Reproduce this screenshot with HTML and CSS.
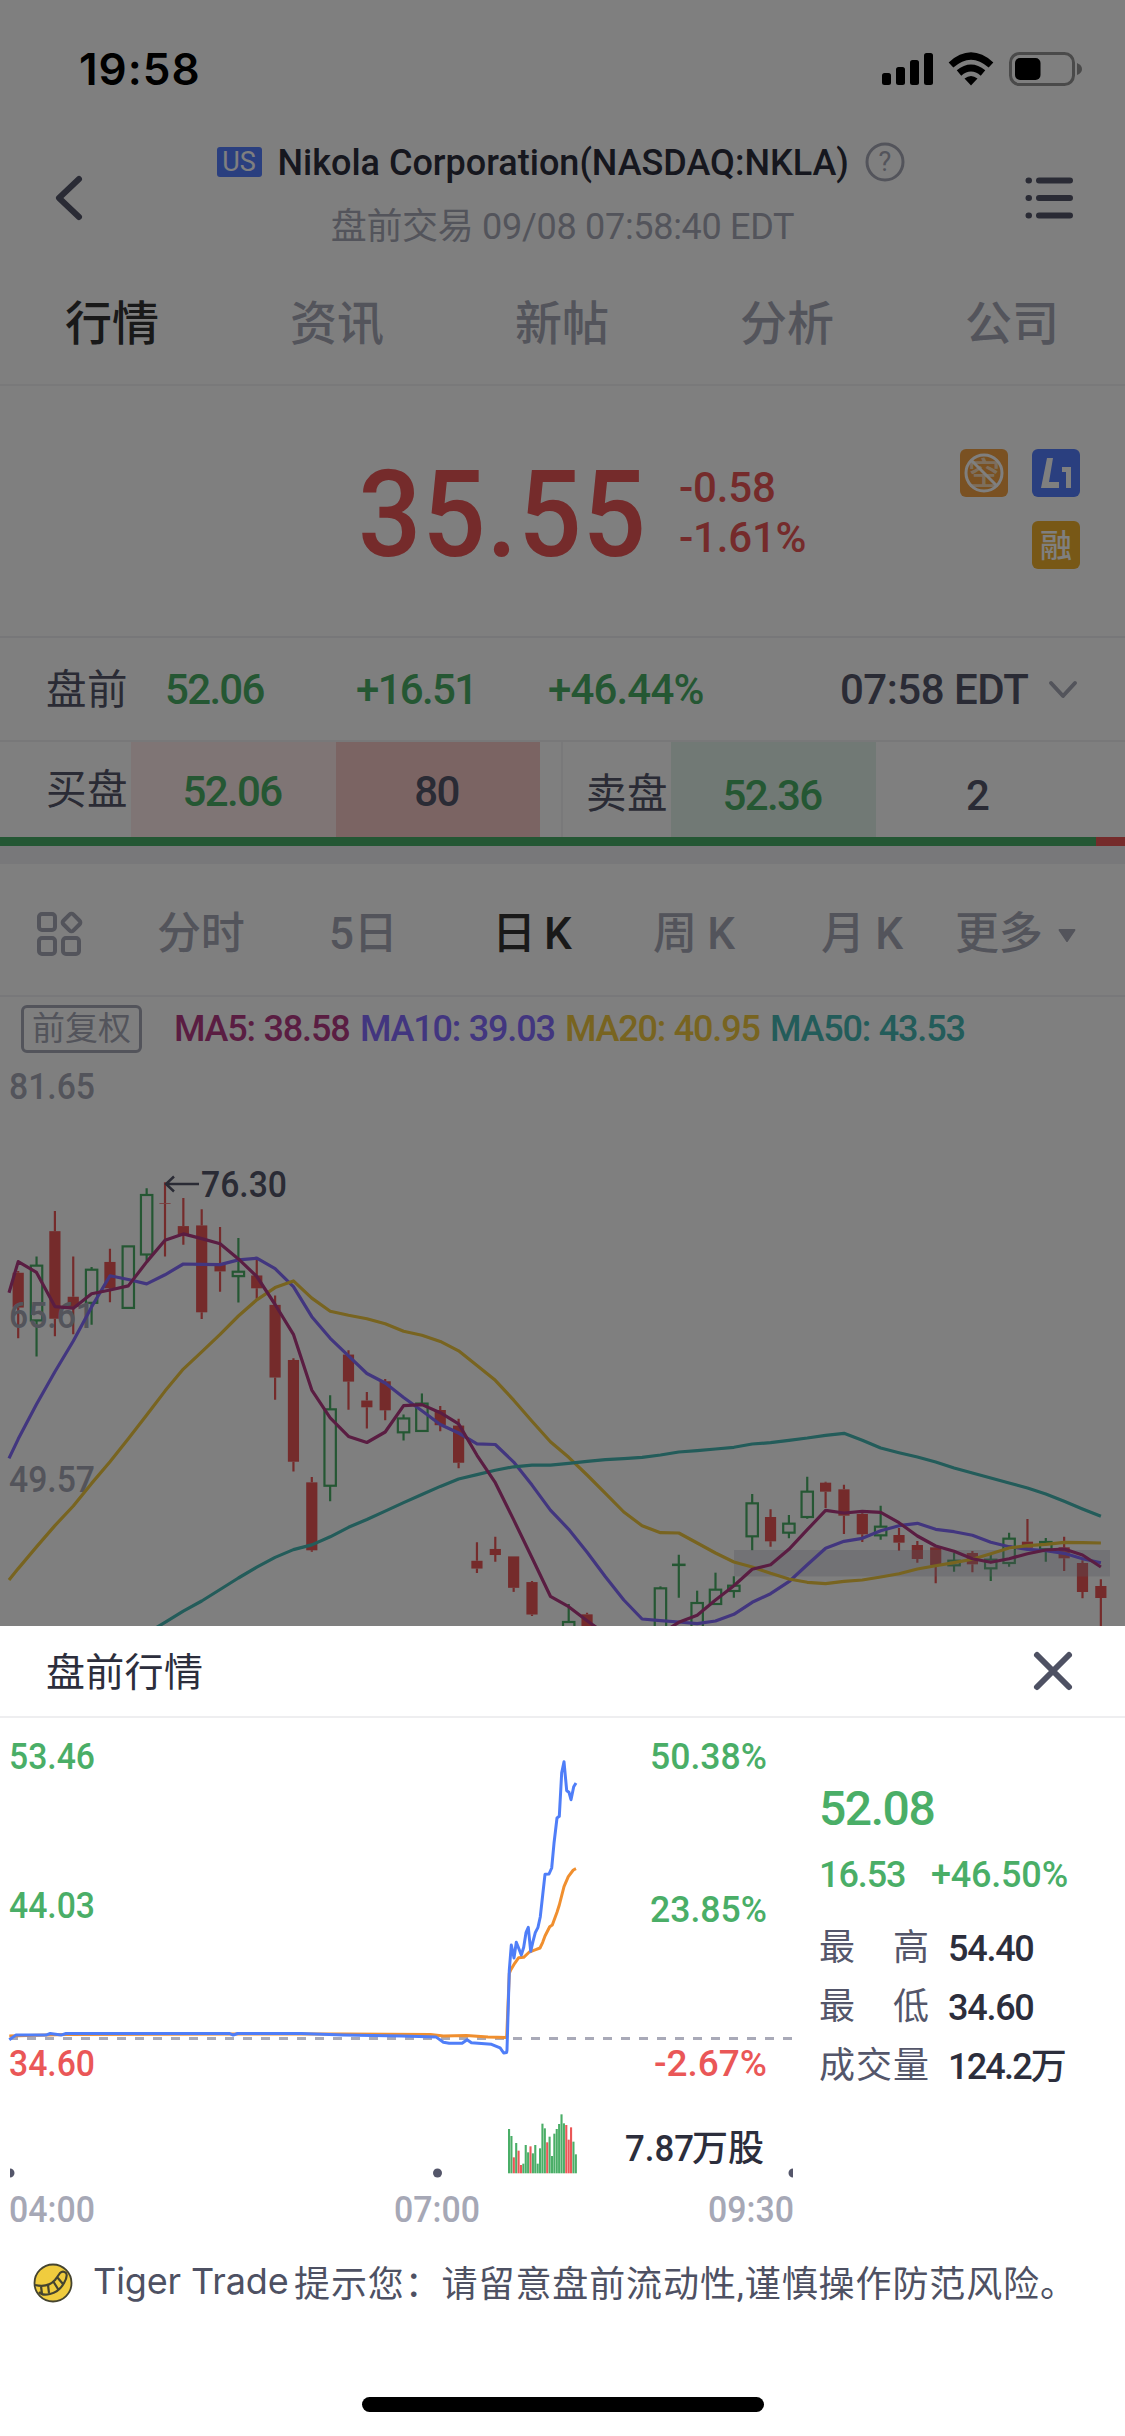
FILE: index.html
```html
<!DOCTYPE html>
<html lang="zh-CN">
<head>
<meta charset="utf-8">
<title>Nikola Corporation (NKLA)</title>
<link rel="stylesheet" href="styles.css">
</head>
<body>
<div class="phone">
  <main class="page">
    <div class="status">
      <span class="clock">19:58</span>
      <svg class="status-icons" width="202" height="36" viewBox="881 51 202 36">
        <rect x="882" y="73" width="9" height="12" rx="2.5"/><rect x="896" y="67" width="9" height="18" rx="2.5"/><rect x="910" y="60" width="9" height="25" rx="2.5"/><rect x="924" y="53" width="9" height="32" rx="2.5"/>
        <g fill="none" stroke="#000" stroke-width="7"><path d="M951 65Q971 47 991 65"/><path d="M959 73Q971 63 983 73"/></g>
        <path d="M964.500 78.500Q971 73.500 977.500 78.500L971 85.500Z"/>
        <rect x="1010.500" y="53.500" width="63" height="31" rx="9" fill="none" stroke="#000" stroke-opacity=".42" stroke-width="3"/>
        <rect x="1015" y="58" width="25.500" height="22" rx="5"/>
        <path d="M1077 63Q1082 65 1082 69T1077 75Z" fill-opacity=".42"/>
      </svg>
    </div>

    <header class="header">
      <svg class="back" width="36" height="52" viewBox="0 0 36 52"><path d="M29 7 9 26 29 45"/></svg>
      <div class="heading">
        <div class="title-row"><span class="market">US</span><h1>Nikola Corporation(NASDAQ:NKLA)</h1>
          <svg width="40" height="40" viewBox="0 0 40 40"><circle cx="20" cy="20" r="18" fill="none" stroke="#a6a8b6" stroke-width="3"/><text x="20" y="29" text-anchor="middle" class="q">?</text></svg>
        </div>
        <div class="subtitle">盘前交易 09/08 07:58:40 EDT</div>
      </div>
      <svg class="list" width="48" height="44" viewBox="0 0 48 44"><path d="M3.500 4.500h.5M14 4.500h31M3.500 22h.5M14 22h31M3.500 39.500h.5M14 39.500h31"/></svg>
    </header>

    <nav class="tabs"><span class="on">行情</span><span>资讯</span><span>新帖</span><span>分析</span><span>公司</span></nav>

    <section class="price">
      <span class="last">35.55</span>
      <div class="delta"><span>-0.58</span><span>-1.61%</span></div>
      <div class="tags">
        <svg width="48" height="48" viewBox="0 0 48 48"><rect width="48" height="48" rx="6" fill="#f4a344"/><text x="24" y="36" text-anchor="middle" class="tag-text soft">空</text><circle cx="24" cy="24" r="18" fill="none" stroke="#fff" stroke-width="3"/><path d="m11 11 26 26" stroke="#fff" stroke-width="3"/></svg>
        <svg width="48" height="48" viewBox="0 0 48 48"><rect width="48" height="48" rx="6" fill="#547eff"/><path d="M15 9h6l-4 24h10v6H9ZM30 18h9v21h-5V23h-4Z" fill="#fff"/></svg>
        <svg class="second" width="48" height="48" viewBox="0 0 48 48"><rect width="48" height="48" rx="6" fill="#f0b02c"/><text x="24" y="35.500" text-anchor="middle" class="tag-text">融</text></svg>
      </div>
    </section>

    <section class="premarket">
      <span class="cjk">盘前</span><span class="up">52.06</span><span class="up">+16.51</span><span class="up pct">+46.44%</span><span class="when">07:58 EDT</span>
      <svg width="32" height="22" viewBox="0 0 32 22"><path d="m4 4 12 13L28 4"/></svg>
    </section>

    <section class="book">
      <span class="cjk">买盘</span><span class="cell bid up">52.06</span><span class="cell bid-size">80</span><i class="rule"></i>
      <span class="cjk ask-label">卖盘</span><span class="cell ask up">52.36</span><span class="cell ask-size">2</span>
    </section>
    <div class="ratio"><i></i><i></i></div>

    <nav class="periods">
      <svg width="48" height="48" viewBox="0 0 48 48"><rect x="3" y="4" width="16" height="16" rx="3"/><rect x="3" y="28" width="16" height="16" rx="3"/><rect x="27" y="28" width="16" height="16" rx="3"/><rect x="28.500" y="5.500" width="14" height="14" rx="2.500" transform="rotate(45 35.500 12.500)"/></svg>
      <span>分时</span><span>5日</span><span class="on">日 K</span><span>周 K</span><span>月 K</span><span>更多</span>
      <svg class="caret" width="20" height="16" viewBox="0 0 20 16"><path d="M2 1h16q1 1 0 2L10.500 14h-1L2 3Q1 2 2 1Z"/></svg>
    </nav>

    <section class="chart">
      <div class="legend"><span class="adjust">前复权</span><span class="ma5">MA5: 38.58</span><span class="ma10">MA10: 39.03</span><span class="ma20">MA20: 40.95</span><span class="ma50">MA50: 43.53</span></div>
      <svg id="kline" width="1125" height="568" viewBox="0 1058 1125 568"></svg>
    </section>
  </main>
  <div class="scrim"></div>

  <section class="sheet">
    <div class="sheet-head"><h2>盘前行情</h2><svg width="48" height="48" viewBox="0 0 48 48"><path d="m8 8 32 32M40 8 8 40"/></svg></div>
    <div class="sheet-body">
      <svg id="intraday" width="800" height="520" viewBox="0 1718 800 520"></svg>
      <div class="stats">
        <div class="big up">52.08</div>
        <div class="change up"><span>16.53</span><span class="pct">+46.50%</span></div>
        <div class="stat"><span class="k"><b>最</b><b>高</b></span><span>54.40</span></div>
        <div class="stat"><span class="k"><b>最</b><b>低</b></span><span>34.60</span></div>
        <div class="stat"><span class="k"><b>成</b><b>交</b><b>量</b></span><span>124.2万</span></div>
      </div>
    </div>
    <div class="tip">
      <svg width="40" height="40" viewBox="0 0 40 40"><circle cx="20" cy="20" r="18.500" fill="#f0cc3e" stroke="#45442f" stroke-width="1.800"/><path d="M2 22Q15 25 22 17 25 13 27 10 30 7 33 10 35 13 31 20 26 29 17 31 9 33 6 29M8 23l1 8M15 22l1 8M20 18l5 8M24 14l6 7" fill="none" stroke="#45442f" stroke-width="2.200"/></svg>
      <span class="brand">Tiger Trade</span><span class="msg">提示您：请留意盘前流动性,谨慎操作防范风险。</span>
    </div>
    <div class="home"></div>
  </section>
</div>
<script src="chart.js"></script>
</body>
</html>
```
FILE: styles.css
```css
* { box-sizing: border-box; }
body { margin: 0; background: #fff; }
.phone {
  position: relative; width: 1125px; height: 2436px; overflow: hidden;
  font-family: Roboto, "Noto Sans CJK SC", sans-serif; font-size: 42px; letter-spacing: -.04em;
  color: #54566a; white-space: nowrap;
}
svg { display: block; flex: none; }
h1, h2 { margin: 0; font-weight: 400; }
.page { height: 1626px; overflow: hidden; background: #fff; }
.scrim { position: absolute; left: 0; top: 0; width: 1125px; height: 1626px; background: rgba(0,0,0,.5); }
.up { color: #4aae67; }
.cjk { letter-spacing: .5px; font-size: 40.5px; margin-left: -1px; }

.status { height: 132px; display: flex; justify-content: space-between; padding: 38px 42px 0 79px; color: #000; }
.clock { font: 600 44px/62px Inter, sans-serif; letter-spacing: 1px; }
.status-icons { margin-top: 13px; }

.header { height: 148px; display: flex; justify-content: space-between; padding: 0 52px 0 50px; }
.header .back { margin-top: 40px; }
.header path { fill: none; stroke: #54566a; stroke-width: 6; stroke-linecap: round; stroke-linejoin: round; }
.list { margin-top: 44px; }
.heading { width: 730px; margin-left: 12px; }
.title-row { display: flex; align-items: center; height: 60px; gap: 17px; padding-left: 20px; }
.title-row h1 { width: 570px; font-weight: 500; font-size: 36px; letter-spacing: 0; line-height: 44px; padding-top: 2px; margin-left: -1px; color: #2c2e3c; }
.market { flex: none; width: 45px; height: 30px; line-height: 31px; border-radius: 3px; background: #547eff; color: #fff; font-size: 27px; letter-spacing: 0; text-align: center; }
.q { font: 27px Roboto, sans-serif; fill: #a6a8b6; }
.subtitle { font-size: 36px; line-height: 71px; color: #a6a8b6; text-align: center; letter-spacing: -.3px; padding-left: 2px; }

.tabs { height: 106px; display: grid; grid-template-columns: repeat(5, 225px); border-bottom: 2px solid #f2f2f4; line-height: 88px; font-size: 47px; font-weight: 500; letter-spacing: 0; text-align: center; color: #a6a8b6; }
.tabs span { padding-right: 1px; }
.phone .on { color: #333; font-weight: 500; }

.price { height: 252px; display: flex; border-bottom: 2px solid #eeeef2; color: #ea5757; }
.last { width: 321px; margin-left: 358px; font-size: 120px; font-weight: 500; line-height: 259px; letter-spacing: .007em; transform: scaleX(.93); transform-origin: 0 50%; }
.delta { width: 281px; display: flex; flex-direction: column; padding-top: 77px; line-height: 50px; font-weight: 500; letter-spacing: -.2px; }
.tags { display: grid; grid-template-columns: 48px 48px; grid-template-rows: 48px 48px; gap: 24px; padding-top: 63px; align-content: start; }
.second { grid-column: 2; }
.tag-text { font: 500 32px "Noto Sans CJK SC", sans-serif; fill: #fff; letter-spacing: 0; }
.soft { fill-opacity: .65; }

.premarket { height: 104px; display: grid; grid-template-columns: 118px 191px 192px 292px 207px auto; align-items: center; padding-left: 47px; border-bottom: 2px solid #f0f0f3; line-height: 104px; }
.when { letter-spacing: -.5px; font-weight: 500; }
.premarket .up, .book .up { font-weight: 500; }
.phone .pct { letter-spacing: -.02em; }
.premarket path { fill: none; stroke: #a6a8b6; stroke-width: 4; stroke-linecap: round; stroke-linejoin: round; }

.book { height: 95px; display: grid; grid-template-columns: 84px 205px 204px 23px 108px 205px 205px; padding-left: 47px; line-height: 100px; }
.book > .cjk { line-height: 97px; }
.cell { text-align: center; font-weight: 500; padding-right: 3px; }
.bid { background: #feebeb; }
.bid-size { background: #f7c9c6; }
.rule { border-right: 2px solid #f2f2f5; }
.book > .ask-label { padding-left: 24px; line-height: 104px; }
.ask { background: #e3f3ea; }
.ask, .ask-size { line-height: 108px; height: 95px; }
.ratio { height: 27px; display: flex; border-bottom: 18px solid #f0f0f4; }
.ratio i { background: #49ae69; width: 1096px; }
.ratio i + i { background: #ea5757; width: 29px; }

.periods { height: 133px; display: grid; grid-template-columns: 121px 172px 163px 161px 168px 134px 104px auto; align-items: center; border-bottom: 2px solid #f0f0f4; padding-left: 36px; font-size: 44px; font-weight: 500; line-height: 140px; letter-spacing: 0; color: #a6a8b6; }
.periods span { letter-spacing: -.3px; }
.periods .on { letter-spacing: -1.5px; }
.periods svg { fill: none; stroke: #a6a8b6; stroke-width: 4; }
.periods .caret { fill: #a6a8b6; stroke: none; margin-left: -2px; margin-top: 4px; }
.legend { height: 61px; display: flex; align-items: center; padding: 2px 0 0 21px; font-size: 36px; font-weight: 500; letter-spacing: -1.2px; word-spacing: 1px; }
.legend span + span { width: 205px; }
.legend .adjust { width: 121px; height: 48px; border: 3px solid #a6a8b6; border-radius: 6px; font-size: 33px; font-weight: 400; line-height: 42px; letter-spacing: 0; text-align: center; color: #a6a8b6; margin-right: 32px; }
.legend .ma5 { width: 186px; color: #b43a84; }
.ma10 { color: #846cff; }
.ma20 { color: #f0c840; }
.ma50 { color: #46b8b4; }
svg text { letter-spacing: 0; }
.label { font: 400 36px Roboto, sans-serif; }
.med { font-weight: 500; }

.sheet { position: absolute; left: 0; top: 1626px; width: 1125px; height: 810px; background: #fff; }
.sheet-head { height: 92px; display: flex; justify-content: space-between; align-items: center; padding: 0 48px 0 46px; border-bottom: 2px solid #eeeef0; }
.sheet-head h2 { font-size: 39px; letter-spacing: .3px; color: #2c2e3c; margin-top: -4px; }
.sheet-head path { stroke: #4e5163; stroke-width: 6; stroke-linecap: round; }
.sheet-body { height: 520px; display: flex; }
.stats { padding: 55px 0 0 19px; font-size: 36px; color: #2c2e3c; letter-spacing: -.03em; }
.big { font-size: 48px; font-weight: 500; line-height: 72px; margin-bottom: 2px; letter-spacing: -.03em; }
.change { display: grid; grid-template-columns: 112px auto; font-weight: 500; line-height: 57px; margin-bottom: 15px; }
.stats .pct { letter-spacing: -.2px; }
.stat { display: grid; grid-template-columns: 110px auto; column-gap: 19px; line-height: 58px; font-weight: 500; }
.stat > span + span { letter-spacing: -.035em; padding-top: 1px; }
.stat:last-child > span + span { letter-spacing: -.05em; }
.k { display: flex; justify-content: space-between; color: #54566a; letter-spacing: 0; }
.k b { font-weight: 400; font-size: 36px; }
.tip { height: 90px; display: flex; align-items: center; padding-left: 33px; font-size: 36px; color: #4e5163; }
.brand, .msg { position: relative; top: -2px; }
.brand { width: 201px; margin-left: 20px; font-family: Inter, sans-serif; letter-spacing: -.1px; }
.msg { letter-spacing: .9px; }
.home { width: 402px; height: 15px; border-radius: 8px; background: #000; margin: 69px auto 0; }
```
FILE: chart.js
```js
const NS = 'http://www.w3.org/2000/svg';
const GREEN = '#4aae67', RED = '#ea5757';

function add(svg, tag, attrs, text) {
  const el = document.createElementNS(NS, tag);
  for (const k in attrs) el.setAttribute(k, attrs[k]);
  if (text) el.textContent = text;
  svg.appendChild(el);
}
function label(svg, text, x, y, width, fill, cls) {
  add(svg, 'text', { x, y, fill, class: 'label ' + (cls || ''), textLength: width, lengthAdjust: 'spacingAndGlyphs' }, text);
}
function line(svg, pts, stroke, width) {
  add(svg, 'polyline', { points: pts.map(p => p[0].toFixed(1) + ',' + p[1].toFixed(1)).join(' '), fill: 'none', stroke, 'stroke-width': width, 'stroke-linejoin': 'round' });
}

// Daily candles: [index, direction, high, body top, body bottom, low]; two price panes with their own scale.
const k = document.getElementById('kline');
const X = i => 18.2 + 18.35 * i;
const early = v => 1100 + v / 2.958, late = v => 1380 + v / 3;
const yAt = (i, v) => (i < 30 ? early : late)(v);
const candles = [
  [0,0,506,511,614,705],[1,1,463,490,652,759],[2,0,328,388,647,699],[3,0,463,582,612,693],[4,1,494,502,600,665],
  [5,0,440,479,557,598],[6,1,433,433,615,615],[7,1,261,281,457,475],[8,0,243,305,307,463],[9,0,290,373,399,428],
  [10,0,323,371,628,648],[11,0,376,486,507,567],[12,1,408,508,521,599],[13,0,470,519,557,588],[14,0,578,606,821,887],
  [15,0,764,769,1070,1099],[16,0,1115,1131,1332,1336],[17,1,873,915,1141,1187],[18,0,740,753,833,916],[19,0,864,889,909,972],
  [20,0,825,832,918,947],[21,1,930,942,983,1007],[22,1,868,898,979,979],[23,0,905,917,962,980],[24,0,943,963,1073,1089],
  [25,0,1308,1363,1386,1399],[26,0,1292,1328,1346,1366],[27,0,1350,1350,1443,1455],[28,0,1423,1426,1522,1526],
  [30,1,672,726,760,780],[31,0,698,703,760,780],[35,1,619,625,800,800],[36,1,524,554,555,653],[37,1,632,669,760,760],
  [38,1,578,629,672,672],[39,1,589,617,633,653],[40,1,342,370,469,511],[41,0,388,411,484,500],[42,1,405,431,458,475],
  [43,1,290,335,411,416],[44,0,305,308,335,384],[45,0,314,328,407,462],[46,0,400,402,463,486],[47,1,377,440,466,479],
  [48,0,444,465,488,512],[49,0,483,495,537,548],[50,0,498,502,555,610],[51,1,518,542,556,575],[52,0,513,519,553,577],
  [53,1,524,539,565,603],[54,1,458,476,549,560],[55,0,417,485,503,503],[56,1,474,486,508,545],[57,0,470,502,535,573],
  [58,0,541,549,636,655],[59,0,598,618,654,760]
];
for (const [i, up, hi, top, bot, lo] of candles) {
  const x = X(i), c = up ? GREEN : RED, a = yAt(i, top), b = yAt(i, bot);
  add(k, 'path', { d: `M${x} ${yAt(i, hi)}V${a}M${x} ${b}V${yAt(i, lo)}`, stroke: c, 'stroke-width': 2.2 });
  add(k, 'rect', up
    ? { x: x - 5.7, y: a, width: 11.4, height: b - a, fill: 'none', stroke: c, 'stroke-width': 2.2 }
    : { x: x - 5.6, y: a, width: 11.2, height: b - a, fill: c });
}
add(k, 'rect', { x: 734, y: 1550, width: 376, height: 26.5, fill: 'rgba(170,170,190,.3)' });
label(k, '81.65', 9, 1099, 86, '#a6a8b6', 'med');
label(k, '65.61', 9, 1328, 86, '#a6a8b6', 'med');
label(k, '49.57', 9, 1491.5, 86, '#a6a8b6', 'med');

const at = (start, vals) => vals.map((v, n) => [X(start + n), yAt(start + n, v)]);
line(k, [[9, early(1060)], ...at(0, [1003,900,804,713,612,520,531,544,517,485,486,487,473,468,499,552,641,705,757,809,837,880,919,960,985,1017,1019,1071,1139,1213,448,517,590,660,717,722,726,731,723,703,667,641,605,554,505,484,475,452,437,430,448,455,466,487,500,508,512,520,536,548])], '#846cff', 3.2);
line(k, [[9, early(1420)], ...at(0, [1386,1322,1259,1201,1134,1070,1002,932,861,796,745,693,639,591,555,535,586,625,637,647,662,684,696,714,742,785,829,888,950,1011,232,285,340,396,437,458,459,489,519,546,561,580,597,607,611,604,600,591,581,567,557,548,538,521,504,497,493,487,488,489])], '#f0c840', 3.2);
line(k, at(7, [1578,1545,1512,1482,1448,1414,1382,1353,1330,1316,1292,1264,1241,1216,1191,1167,1143,1121,1108,1095,1085,1080,1080,250,244,239,236,232,225,216,212,207,202,192,188,181,174,166,160,181,204,218,231,246,264,279,294,309,324,342,364,387,409]), '#46b8b4', 3.2);
line(k, [[9, early(570)], ...at(0, [478,510,611,616,573,562,550,479,415,396,410,425,470,522,605,693,858,940,995,1013,982,904,901,925,958,1051,1132,1242,1354,1468,680,722,762,785,785,762,727,706,660,617,568,554,508,449,391,399,394,397,428,468,498,514,536,547,536,521,510,507,525,561])], '#b43a84', 3.2);
add(k, 'path', { d: 'M199 1184H166M174 1176.500 166 1184l8 7.500', fill: 'none', stroke: '#54566a', 'stroke-width': 2.5 });
label(k, '76.30', 201, 1197, 86, '#54566a', 'med');

// Pre-market price, average and volume.
const d = document.getElementById('intraday');
label(d, '53.46', 9, 1769, 86, GREEN, 'med');
label(d, '44.03', 9, 1918, 86, GREEN, 'med');
label(d, '34.60', 9, 2076, 86, RED, 'med');
label(d, '50.38%', 650, 1769, 117, GREEN, 'med');
label(d, '23.85%', 650, 1922, 117, GREEN, 'med');
label(d, '-2.67%', 654, 2076, 113, RED, 'med');
add(d, 'path', { d: 'M11 2038.500H793', stroke: '#a9aab8', 'stroke-width': 3, 'stroke-dasharray': '9 9', 'stroke-dashoffset': 2 });
const wide = ([x, y]) => [x * .7175, 1630 + y / 1.9454], tall = ([x, y]) => [480 + x / 3, 1740 + y / 3];
line(d, [
  ...[[13,790],[92,787],[330,786],[478,786],[600,787],[618,790],[650,789],[680,792],[706,793]].map(wide),
  ...[[80,892],[88,700],[92,690],[104,670],[116,653],[131,652],[148,636],[167,629],[180,624],[188,607],[195,588],[209,560],[217,555],[231,517],[238,495],[252,440],[265,410],[280,390],[288,386]].map(tall)
], '#f08f2f', 3);
line(d, [
  ...[[13,797],[22,788],[64,788],[70,785],[85,788],[92,785],[320,785],[325,788],[331,785],[420,785],[478,788],[560,790],[608,792],[618,802],[626,804],[644,804],[651,797],[657,803],[685,806],[697,813],[702,823],[706,822]].map(wide),
  ...[[81,930],[88,690],[94,615],[102,654],[109,607],[116,625],[124,645],[131,622],[138,578],[145,562],[152,634],[159,604],[166,578],[174,562],[181,530],[188,465],[195,403],[207,402],[215,384],[222,310],[231,234],[238,229],[245,98],[252,65],[260,152],[267,157],[273,179],[281,140],[288,129]].map(tall)
], '#4f7ef8', 3);
const tops = [1167,1188,-1252,1209,-1232,-1275,1271,1215,1237,-1219,1240,1215,1271,1225,1151,1165,-1207,1190,1248,1181,1167,1152,1123,1150,-1155,-1199,-1162,1205,1243];
tops.forEach((t, i) => {
  const y = 1740 + Math.abs(t) / 3;
  add(d, 'rect', { x: 508 + i * 2.385, y, width: 2.1, height: 2173.3 - y, fill: t > 0 ? GREEN : RED });
});
label(d, '7.87', 625, 2161, 69, '#2c2e3c', 'med');
add(d, 'text', { x: 692, y: 2161, fill: '#2c2e3c', 'font-size': 36, 'font-weight': 500 }, '万股');
add(d, 'path', { d: 'M10 2168.500a4.500 4.500 0 0 1 0 9ZM793 2168.500a4.500 4.500 0 0 0 0 9Z', fill: '#54566a' });
add(d, 'circle', { cx: 437.5, cy: 2173, r: 4.5, fill: '#54566a' });
label(d, '04:00', 9, 2222, 86, '#a6a8b6', 'med');
label(d, '07:00', 394, 2222, 86, '#a6a8b6', 'med');
label(d, '09:30', 708, 2222, 86, '#a6a8b6', 'med');
```
